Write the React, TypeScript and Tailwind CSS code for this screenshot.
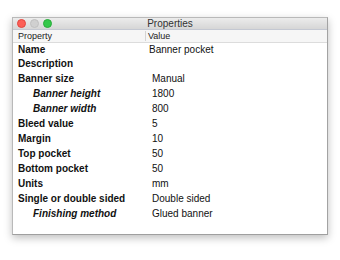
import React from 'react';

type Row = { label: string; value: string; sub?: boolean; tight?: boolean };

const rows: Row[] = [
  { label: 'Description', value: '' },
  { label: 'Banner size', value: 'Manual' },
  { label: 'Banner height', value: '1800', sub: true },
  { label: 'Banner width', value: '800', sub: true },
  { label: 'Bleed value', value: '5' },
  { label: 'Margin', value: '10' },
  { label: 'Top pocket', value: '50' },
  { label: 'Bottom pocket', value: '50' },
  { label: 'Units', value: 'mm' },
  { label: 'Single or double sided', value: 'Double sided' },
  { label: 'Finishing method', value: 'Glued banner', sub: true },
];

export default function App() {
  return (
    <div className="w-[340px] h-[260px] bg-white pt-[17px] pl-[12px] font-['Liberation_Sans',Arial,sans-serif] text-[#111]">
      <div className="w-[316px] h-[218px] border border-[#b9b9b9] border-r-[#a3a3a3] border-b-[#9f9f9f] bg-white shadow-[0_3px_8px_rgba(0,0,0,0.25)] flex flex-col">
        {/* title bar */}
        <div className="relative h-[12px] bg-gradient-to-b from-[#ececec] to-[#d6d6d6] border-b border-[#c4c8d2] flex items-center justify-center">
          <div className="absolute left-[4px] top-[1px] flex gap-[4px]">
            <span className="w-[9px] h-[9px] rounded-full bg-[#fc5f57] border border-[#e2463f]" />
            <span className="w-[9px] h-[9px] rounded-full bg-[#d0d0d0] border border-[#c0c0c0]" />
            <span className="w-[9px] h-[9px] rounded-full bg-[#34c84a] border border-[#2aac3c]" />
          </div>
          <span className="text-[10px] leading-none text-[#333]">Properties</span>
        </div>
        {/* header */}
        <div className="h-[13px] flex bg-[#f6f6f6] border-b border-[#dcdcdc] text-[9px] leading-[12px] text-[#222]">
          <div className="w-[133px] pl-[5px] border-r border-[#d4d4d4] my-[1px] leading-[10px]">Property</div>
          <div className="pl-[2px]">Value</div>
        </div>
        {/* rows */}
        <div className="flex h-[13px] items-center text-[10px]">
          <div className="w-[134px] pl-[5px] font-bold">Name</div>
          <div className="pl-[2px]">Banner pocket</div>
        </div>
        {rows.map((r) => (
          <div key={r.label} className="flex h-[15px] items-center text-[10px]">
            <div className={r.sub ? 'w-[134px] pl-[20px] font-bold italic' : 'w-[134px] pl-[5px] font-bold'}>
              {r.label}
            </div>
            <div className="pl-[5px]">{r.value}</div>
          </div>
        ))}
      </div>
    </div>
  );
}
